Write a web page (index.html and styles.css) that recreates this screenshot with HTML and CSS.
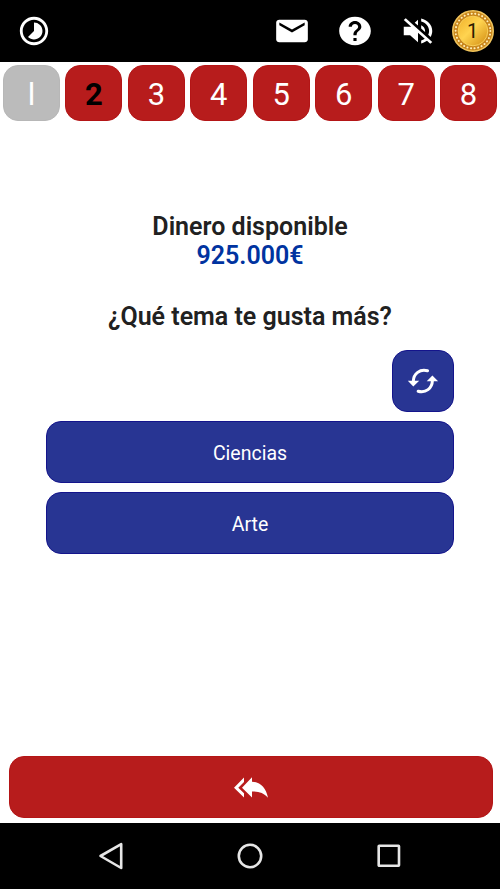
FILE: index.html
```html
<!DOCTYPE html>
<html lang="es">
<head>
    <meta charset="utf-8">
    <title>Elige tema</title>
    <link rel="stylesheet" href="styles.css">
</head>
<body>
    <header class="topbar">
        <svg class="icon-time" viewBox="0 0 24 24" preserveAspectRatio="none"><path d="M16.24 7.76C15.07 6.59 13.54 6 12 6v6l-4.24 4.24c2.34 2.34 6.14 2.34 8.49 0 2.34-2.34 2.34-6.14-.01-8.48zM12 2C6.48 2 2 6.48 2 12s4.48 10 10 10 10-4.48 10-10S17.52 2 12 2zm0 18c-4.42 0-8-3.58-8-8s3.58-8 8-8 8 3.58 8 8-3.58 8-8 8z"/></svg>
        <div class="actions">
            <svg class="icon" viewBox="0 0 24 24" preserveAspectRatio="none"><path d="M20 4H4c-1.1 0-1.99.9-1.99 2L2 18c0 1.1.9 2 2 2h16c1.1 0 2-.9 2-2V6c0-1.1-.9-2-2-2zm0 4l-8 5-8-5V6l8 5 8-5v2z"/></svg>
            <svg class="icon" viewBox="0 0 24 24" preserveAspectRatio="none"><path d="M12 2C6.48 2 2 6.48 2 12s4.48 10 10 10 10-4.48 10-10S17.52 2 12 2zm1 17h-2v-2h2v2zm2.07-7.75l-.9.92C13.45 12.9 13 13.5 13 15h-2v-.5c0-1.1.45-2.1 1.17-2.83l1.24-1.26c.37-.36.59-.86.59-1.41 0-1.1-.9-2-2-2s-2 .9-2 2H8c0-2.21 1.79-4 4-4s4 1.79 4 4c0 .88-.36 1.68-.93 2.25z"/></svg>
            <svg class="icon" viewBox="0 0 24 24" preserveAspectRatio="none"><path d="M16.5 12c0-1.77-1.02-3.29-2.5-4.03v2.21l2.45 2.45c.03-.2.05-.41.05-.63zm2.5 0c0 .94-.2 1.82-.54 2.64l1.51 1.51C20.63 14.91 21 13.5 21 12c0-4.28-2.99-7.86-7-8.77v2.06c2.89.86 5 3.54 5 6.71zM4.27 3L3 4.27 7.73 9H3v6h4l5 5v-6.73l4.25 4.25c-.67.52-1.42.93-2.25 1.18v2.06c1.38-.31 2.63-.95 3.69-1.81L19.73 21 21 19.73l-9-9L4.27 3zM12 4L9.91 6.09 12 8.18V4z"/></svg>
            <svg class="coin" viewBox="0 0 42 42">
                <defs>
                    <linearGradient id="gold" x1="0" y1="0" x2="1" y2="1">
                        <stop offset="0" stop-color="#f0b02a"/>
                        <stop offset=".45" stop-color="#ffd450"/>
                        <stop offset="1" stop-color="#d08a10"/>
                    </linearGradient>
                </defs>
                <circle cx="21" cy="21" r="20.2" fill="#c8861c" stroke="#f0c45c" stroke-width="1.6"/>
                <circle cx="21" cy="21" r="17.4" fill="none" stroke="#ffeeb8" stroke-width="2" stroke-linecap="round" stroke-dasharray=".1 3.54"/>
                <circle cx="21" cy="21" r="14.8" fill="url(#gold)" stroke="#f9cf58" stroke-width="1"/>
                <text class="coin-text" x="20.500" y="28" text-anchor="middle">1</text>
            </svg>
        </div>
    </header>

    <div class="levels">
        <div class="level done">l</div>
        <div class="level current">2</div>
        <div class="level">3</div>
        <div class="level">4</div>
        <div class="level">5</div>
        <div class="level">6</div>
        <div class="level">7</div>
        <div class="level">8</div>
    </div>

    <main class="content">
        <div class="title">Dinero disponible</div>
        <div class="title money">925.000€</div>
        <div class="title question">¿Qué tema te gusta más?</div>
        <button class="btn refresh">
            <svg width="32" height="26" viewBox="0 0 32 26">
                <path class="arc" d="M20.500 2.800C13 .8 6.500 5.500 6.300 13.500M11.200 23.200C18.700 25.200 25.200 20.500 25.400 12.500"/>
                <path d="M.8 12.800h11.400L6.300 18.500zM19.700 13.200l5.700-5.700 5.700 5.700z"/>
            </svg>
        </button>
        <button class="btn">Ciencias</button>
        <button class="btn">Arte</button>
    </main>

    <button class="back">
        <svg width="36" height="22" viewBox="0 0 36 22">
            <path d="M11 .5v4.400L5.300 10.700l5.700 5.600v4.200L1 10.700zM19 .3v4.400c8.500.2 14 6.500 16 16.100-4.300-4.800-9-6.300-16-6.200v5.900L9 10.700z"/>
        </svg>
    </button>

    <nav class="navbar">
        <svg width="26" height="28" viewBox="0 0 26 28"><path d="M23.200 2.200v23.800L2.500 14z"/></svg>
        <svg width="26" height="28" viewBox="0 0 26 28"><circle cx="13" cy="14" r="11.200"/></svg>
        <svg width="26" height="28" viewBox="0 0 26 28"><rect x="2.700" y="3.800" width="20.300" height="20" rx=".5"/></svg>
    </nav>
</body>
</html>
```
FILE: styles.css
```css
* { box-sizing: border-box; }
body { margin: 0; height: 889px; display: flex; flex-direction: column; background: #fff; font-family: Roboto, sans-serif; }
button { border: 0; padding: 0; font-family: inherit; }
svg { display: block; flex: none; }

.topbar { height: 62px; background: #000; display: flex; justify-content: space-between; align-items: center; padding: 0 6px 0 17px; }
.topbar svg { fill: #fff; }
.icon-time { width: 34px; height: 34px; }
.actions { display: flex; align-items: center; }
.icon { width: 38px; height: 34px; margin-right: 24.6px; }
.actions .icon:nth-child(3) { margin-right: 15.5px; }
.coin { width: 42px; height: 42px; }
.coin-text { font-size: 20px; fill: #2b1b00; }

.levels { display: flex; gap: 5.5px; padding: 3px 3px 0; }
.level { flex: 1; height: 56px; border-radius: 15px; border: 1px solid #b41516; background: #b71c1c; color: #fff; font-size: 31px; line-height: 57px; text-align: center; }
.done { background: #bbb; border-color: #b7b7b7; }
.current { color: #000; font-weight: 700; }

.content { flex: 1; padding: 91px 46px 0; display: flex; flex-direction: column; align-items: center; }
.title { font-size: 25px; line-height: 29px; font-weight: 600; color: #212121; }
.money { color: #0033a0; }
.question { margin-top: 32px; }
.btn { width: 100%; height: 62px; margin-bottom: 9px; padding-top: 2px; border: 1px solid #14148c; border-radius: 15px; background: #283593; color: #fff; font-size: 19.5px; }
.refresh { width: 62px; align-self: flex-end; margin-top: 19px; padding-top: 0; display: flex; align-items: center; justify-content: center; }
.refresh svg { fill: #fff; }
.refresh .arc { fill: none; stroke: #fff; stroke-width: 3; stroke-linecap: round; }

.back { height: 62px; margin: 0 7px 5px 9px; padding-top: 2px; border-radius: 15px; border: 1px solid #b41516; background: #b71c1c; display: flex; align-items: center; justify-content: center; }
.back svg { fill: #fff; }

.navbar { height: 66px; background: #000; display: flex; justify-content: center; align-items: center; gap: 113px; }
.navbar svg { fill: none; stroke: #e6e6e6; stroke-width: 2.6; stroke-linejoin: round; }
```
